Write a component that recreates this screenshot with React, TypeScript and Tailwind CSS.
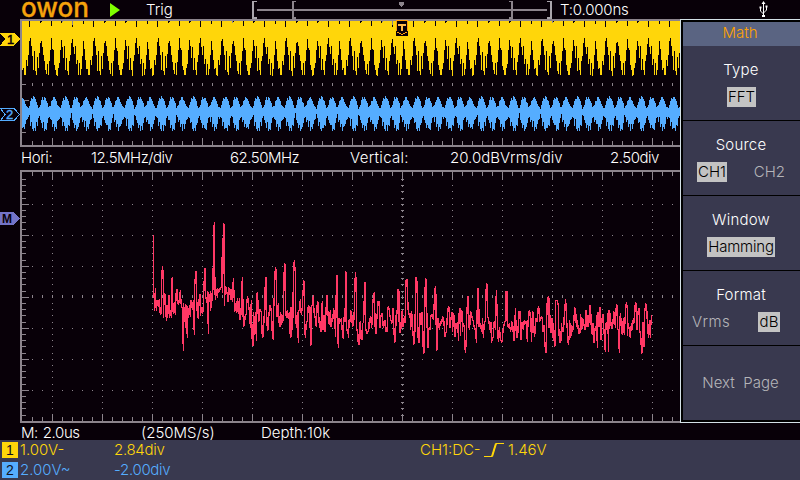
import type { ReactNode } from "react";

const GREY = "#8c848c";
const YELLOW = "#ffd60a";
const BLUE = "#55adff";

// FFT trace vertices, in thirds of a pixel
const SPECTRUM_LOW =
  "38,61 40,61 40,250 43,235 44,288 46,220 49,288 52,255 55,275 58,252 61,300 64,295 65,207 67,153 70,175 70,308 73,234 76,240 76,305 79,270 80,318 82,270 83,310 86,240 88,245 89,308 91,285 94,308 94,205 97,187 97,258 100,297 103,260 106,300 109,222 112,225 112,240 115,270 118,260 121,225 124,275 127,280 130,407 130,265 133,320 136,268 137,340 139,270 142,370 143,272 146,308 148,270 151,305 152,256 155,260 157,285 160,256 163,360 164,216 167,168 170,175 170,245 172,300 175,312 178,240 181,240 182,302 184,275 188,297 190,270 194,160 196,162 197,240 200,265 203,229 205,357 206,232 209,262 212,228 212,288 215,235 218,258 221,70 223,20 224,240 226,185 226,255 229,232 232,220 232,250 235,222 238,232 241,217 244,217 247,108 248,235 250,25 253,28 253,272 256,213 259,220 262,240 264,262 266,218 270,222 271,255 274,222 277,260 280,190 282,235 284,290 287,265 289,295 292,250 295,298 298,250 299,312 302,312 304,270 307,185 309,270 310,335 313,330 316,300 319,297 320,260 323,243 326,285 329,275 331,340 334,255 337,392 340,390 341,290 344,360 347,290 349,378 350,240 353,232 355,318 358,318 360,283 364,290 367,368 370,365 371,303 374,325 376,187 379,187 379,265 382,345 385,345 386,310 389,270 392,272 395,305 397,358 400,376 401,285 403,240 406,157 409,168 410,307 412,300 415,265 418,335 421,335 422,290 425,330 428,300 430,318 433,145 436,148 436,265 439,310 442,285 445,312 448,290 451,368 453,275 455,367 457,290 459,310 460,172 463,135 466,175 467,315 470,340 472,290 475,383 476,290 479,280 481,253 484,300 487,275 491,195 493,205 494,317 496,370 499,320 502,320 505,270 510,278 511,390 514,390 515,275 518,265 520,240 522,290 526,310 529,335 532,260 535,265 536,325 539,305 541,348 544,350 545,290 547,257 549,345 552,300 555,350 558,290 560,240 562,243 564,300 568,330 571,285 573,335 576,310 578,320 581,278 584,318 587,365 588,260 590,180 593,185 593,345 595,398 597,308 600,320 604,310 607,350 610,372 611,305 615,320 617,170 619,172 620,345 623,345 626,368 627,315 630,322 632,287 635,290 637,335 641,330 644,255 646,170 648,190 650,345 653,345 655,390 658,388 659,322 662,320 663,370 665,375 668,373 668,325 671,322 674,202 677,205 677,338 680,357 683,350 686,350 688,315 692,305 695,340 699,255 703,230 706,355 709,355 710,320 714,260 717,258 720,340 723,300 727,295 730,340 735,315 738,350 741,350 744,275 747,280 751,310 756,325 759,278 762,350 764,383 767,375 768,300 771,297 774,223 777,228 777,322 780,322";
const SPECTRUM_HIGH =
  "0,322 0,355 3,340 5,290 8,285 9,335 12,310 15,325 18,195 22,193 24,280 27,300 30,295 32,345 35,287 38,340 41,388 44,385 45,320 48,187 51,200 53,318 55,382 58,382 60,295 63,330 66,290 68,325 70,415 73,413 74,310 76,190 79,193 81,325 84,400 86,340 90,345 93,300 97,300 100,315 104,240 106,213 108,245 109,405 112,405 113,310 116,315 118,345 121,320 125,325 128,303 132,320 134,367 137,355 140,350 141,315 145,275 148,280 150,340 153,310 156,292 158,350 160,295 163,305 165,365 168,325 172,345 174,320 175,378 178,280 181,280 181,362 184,285 187,290 187,350 190,325 193,335 196,415 199,380 200,310 203,245 206,247 206,335 209,345 211,290 214,295 217,312 220,320 224,345 227,340 229,383 231,310 233,222 236,222 237,335 241,325 245,350 248,310 250,370 253,320 256,318 259,205 262,208 262,300 266,315 270,345 273,322 274,383 277,375 280,365 281,325 284,320 286,345 289,225 291,280 293,362 296,380 298,335 301,365 304,382 307,380 309,345 313,325 316,318 318,228 321,230 321,315 325,340 328,325 332,350 335,320 338,325 341,375 344,375 346,280 350,370 353,365 355,325 357,290 360,290 362,375 365,370 366,320 370,345 373,315 376,325 379,318 382,382 383,345 386,290 389,285 392,320 395,380 397,290 400,295 403,365 406,350 408,310 411,320 413,290 416,272 419,320 422,310 426,305 429,350 432,330 434,375 437,415 439,410 441,270 444,245 447,250 447,340 450,300 453,355 456,310 458,370 461,325 463,395 466,390 467,256 473,258 475,275 477,360 480,383 483,375 484,325 488,350 491,345 493,295 497,252 499,300 502,345 505,390 508,360 509,315 512,370 515,330 518,350 521,325 524,277 527,285 529,335 532,315 536,355 540,355 542,298 545,345 548,310 552,330 555,345 558,285 561,335 563,300 566,335 569,270 572,280 574,345 577,360 579,325 582,385 585,340 588,345 590,300 592,400 594,290 597,335 600,275 601,370 604,375 606,310 609,298 612,350 616,412 618,325 621,330 623,295 626,412 627,285 631,300 634,340 638,335 641,290 644,295 646,340 649,268 652,272 653,340 656,350 658,415 659,310 662,295 664,345 667,360 670,310 673,360 676,295 679,262 682,280 682,362 685,325 688,345 691,370 694,325 697,345 700,310 703,325 706,262 709,265 711,345 714,290 717,280 719,345 722,360 725,415 728,412 729,320 732,395 734,295 737,265 740,275 743,345 746,370 748,315 751,368 753,320 755,300";

const range = (n: number) => Array.from({ length: n }, (_, i) => i);

// CH1 repeats every 64 columns: lowest lit row of each column
const CH1_BOTTOM = [
  50, 49, 56, 56, 41, 46, 36, 22, 19, 27, 36, 51, 32, 52, 56, 37, 49, 34, 24, 22, 27, 36, 42, 51, 55, 44, 56, 42, 31, 19, 29, 31,
  46, 51, 56, 56, 49, 44, 31, 21, 27, 39, 27, 51, 39, 51, 56, 42, 36, 24, 19, 28, 35, 27, 45, 40, 56, 44, 56, 50, 36, 22, 30, 41,
];
// columns where the sampled top edge dips, and how far down
const CH1_DIPS: Record<number, number> = { 7: 8, 18: 4, 19: 3, 29: 7, 39: 4, 40: 3, 50: 8, 61: 5 };

// CH2 repeats every 32 columns
const CH2_TOP = [
  78, 80, 82, 85, 87, 88, 89, 86, 82, 79, 80, 77, 78, 80, 82, 86, 89, 88, 86, 81, 78, 80, 78, 79, 82, 84, 88, 87, 86, 82, 81, 78,
];
const CH2_BOTTOM = [
  112, 108, 110, 105, 101, 100, 98, 99, 107, 103, 110, 112, 109, 112, 106, 107, 99, 97, 101, 104, 109, 106, 112, 110, 111, 104, 99, 98, 103, 101, 108, 105,
];

function columns(top: (i: number) => number, bottom: (i: number) => number) {
  return range(658)
    .map((i) => `M${22 + i} ${top(i)}h1V${bottom(i)}h-1z`)
    .join("");
}

const ch1Path = columns(
  (i) => CH1_DIPS[i % 64] ?? 2,
  (i) => CH1_BOTTOM[i % 64] + (i % 5 === 0 ? 1 : 0),
);
const ch2Path = columns(
  (i) => CH2_TOP[i % 32] + ((i * 5) % 7 === 0 ? 1 : 0),
  (i) => CH2_BOTTOM[i % 32] - ((i * 11) % 7 === 0 ? 3 : 0),
);

function TimeView() {
  return (
    <svg className="block h-[128px] w-[680px]" viewBox="0 0 680 128" shapeRendering="crispEdges">
      {range(65).map((i) => {
        const x = 32 + i * 10;
        const major = i % 5 === 2;
        return (
          <g key={i} fill={GREY}>
            <rect x={x} y={2} width={1} height={major ? 7 : 4} />
            <rect x={x} y={64} width={1} height={3} />
            <rect x={x} y={major ? 119 : 122} width={1} height={major ? 7 : 4} />
          </g>
        );
      })}
      <path d="M22 65h4v1h-4zM22 81h7v1h-7zM22 113h4v1h-4z" fill={GREY} />
      <path d={ch1Path} fill={YELLOW} />
      <path d={ch2Path} fill={BLUE} />
      <path d="M20 0h660v2H22v124h658v2H20z" fill={GREY} />

      <path d="M0 14h14l6 6-6 7H0l5-7z" fill={YELLOW} />
      <text x={7} y={25} fontSize={13} className="font-['Liberation_Sans']" fill="#080008" stroke="#080008" strokeWidth={0.5}>1</text>
      <path d="M.5 89.500h13.500l5.500 6-5.500 6H.5l4.500-6z" fill="none" stroke={BLUE} />
      <text x={6} y={100} fontSize={13} className="font-['Liberation_Sans']" fill={BLUE} stroke={BLUE} strokeWidth={0.4}>2</text>

      <path d="M396 1h12v16h-12z" fill="#080008" />
      <path d="M396 1h12v11h-1V2h-10v10h-1zM397 13h2v1h2v1h2v-1h2v-1h2v1h-2v1h-2v1h-2v-1h-2v-1h-2z" fill="#ff9e10" />
      <path d="M398 5h8v2h-3v5h-2V7h-3z" fill="#ffb84a" />
    </svg>
  );
}

function SpectrumView() {
  return (
    <svg className="block h-[253px] w-[680px]" viewBox="0 0 680 253" shapeRendering="crispEdges">
      <g fill={GREY}>
        {range(65).map((i) => {
          const x = 32 + i * 10;
          const major = i % 5 === 2;
          return (
            <g key={i}>
              <rect x={x} y={2} width={1} height={major ? 7 : 4} />
              <rect x={x} y={major ? 244 : 247} width={1} height={major ? 7 : 4} />
              <rect x={x} y={125} width={1} height={3} />
              {[34, 65, 96, 158, 189, 220].map((y) => (
                <rect key={y} x={x} y={y} width={1} height={1} />
              ))}
            </g>
          );
        })}
        {range(39).map((j) => {
          const y = Math.round(9 + j * 6.2);
          const major = j % 5 === 4;
          return (
            <g key={j}>
              <rect x={22} y={y} width={major ? 7 : 4} height={1} />
              {range(13).map((i) => (
                <rect key={i} x={52 + i * 50} y={y} width={1} height={1} />
              ))}
              <path d={`M401 ${y}h3v1h-1v1h-1v-1h-1z`} />
            </g>
          );
        })}
        <path d="M20 0h660v2H22v249h658v2H20z" />
      </g>
      <g fill="none" stroke="#ff3865" strokeWidth={4} strokeLinejoin="bevel">
        <polyline points={SPECTRUM_LOW} transform="translate(140 45) scale(.33333)" />
        <polyline points={SPECTRUM_HIGH} transform="translate(400 45) scale(.33333)" />
      </g>
      <path d="M0 42h14l6 6.500-6 6.500H0z" fill="#7474c8" />
      <text x={2} y={53} fontSize={12} fontWeight={700} className="font-['Liberation_Sans']" fill="#080008">M</text>
    </svg>
  );
}

function TopBar() {
  return (
    <header className="flex h-[19px] shrink-0 items-center">
      <svg className="h-[19px] w-[146px] overflow-visible" viewBox="0 0 146 19">
        <text x={21} y={17} fontSize={27} fontWeight={500} textLength={68} lengthAdjust="spacingAndGlyphs" className="font-['Inter']" fill="#f5a30c" stroke="#f5a30c" strokeWidth={0.3}>owon</text>
        <path d="M110 3l10 7-10 7z" fill="#80ff00" />
      </svg>
      <span className="w-[106px] pt-px">Trig</span>
      <svg className="h-[19px] w-[308px]" viewBox="252 0 308 19" shapeRendering="crispEdges">
        <path d="M257 9h290v2H257z" fill={GREY} />
        <path d="M252 1h5v1h-3v15h3v2h-5zM552 1h-5v1h3v15h-3v2h5z" fill="#aaa5ac" />
        <path d="M292 1h4v1h-2v15h2v2h-4zM513 1h-4v1h2v15h-2v2h4z" fill={GREY} />
        <path d="M399 2h5v3h-1v1h-1v1h-1V6h-1V5h-1z" fill={GREY} />
      </svg>
      <span className="w-[199px] pt-[2px] tracking-[-0.2px]">T:0.000ns</span>
      <svg className="h-[17px] w-[9px]" viewBox="0 0 9 17" fill="none" stroke="#fff" strokeWidth={1}>
        <path d="M4.500 2v13M1.500 7v3l3 3M7.500 6v3l-3 3" />
        <path d="M4.500 0l2 3h-4zM3 14h3v2H3zM.5 5.500h2v2h-2zM6.500 4.500h2v2h-2z" fill="#fff" stroke="none" />
      </svg>
    </header>
  );
}

function Option({ on, children }: { on?: boolean; children: ReactNode }) {
  return on ? (
    <span className="h-5 bg-[#c3c3c3] px-px leading-5 text-black">{children}</span>
  ) : (
    <span className="h-5 leading-5 text-[#b5b5b9]">{children}</span>
  );
}

function MenuItem({ title, children }: { title: string; children: ReactNode }) {
  return (
    <div className="h-[74px] bg-[#39394f] pt-[14px]">
      <div className="h-[21px] pr-px text-center leading-5 tracking-[0.2px]">{title}</div>
      <div className="flex justify-center pt-[6px]">{children}</div>
    </div>
  );
}

function Menu() {
  return (
    <aside className="h-[404px] w-[120px] border-y border-l border-[#d3e0e6] bg-black pt-[2px] pl-[2px]">
      <h1 className="h-6 bg-[#5a6482] pr-[3px] text-center leading-[22px] text-[#ffa200]">Math</h1>
      <div className="flex flex-col gap-px">
        <MenuItem title="Type">
          <Option on>FFT</Option>
        </MenuItem>
        <MenuItem title="Source">
          <div className="flex w-full justify-between pr-[15px] pl-[14px]">
            <Option on>CH1</Option>
            <Option>CH2</Option>
          </div>
        </MenuItem>
        <MenuItem title="Window">
          <div className="flex pr-px tracking-[-0.2px]">
            <Option on>Hamming</Option>
          </div>
        </MenuItem>
        <MenuItem title="Format">
          <div className="flex w-full justify-between pr-5 pl-[9px] tracking-[0.4px]">
            <Option>Vrms</Option>
            <Option on>dB</Option>
          </div>
        </MenuItem>
        <div className="h-[74px] bg-[#39394f] pr-[2px] text-center leading-[74px] text-[#b5b5b9]">Next&nbsp; Page</div>
      </div>
    </aside>
  );
}

function StatusBar() {
  return (
    <footer className="flex h-10 shrink-0 bg-[#39394f] text-[#ffd60a]">
      <div className="flex w-[420px] flex-col">
        <div className="flex h-5 items-center pl-[2px]">
          <b className="mr-[2px] h-4 w-4 bg-[#ffd60a] text-center font-['Liberation_Sans'] text-[14px] leading-4 text-[#101020]">1</b>
          <span className="w-[94px]">1.00V-</span>
          <span className="tracking-[-0.3px]">2.84div</span>
        </div>
        <div className="flex h-5 items-center pl-[2px] text-[#55adff]">
          <b className="mr-[2px] h-4 w-4 bg-[#55adff] text-center font-['Liberation_Sans'] text-[14px] leading-4 text-[#101020]">2</b>
          <span className="w-[94px]">2.00V~</span>
          <span className="tracking-[-0.3px]">-2.00div</span>
        </div>
      </div>
      <div className="flex h-5 items-center">
        <span className="w-[64px]">CH1:DC-</span>
        <svg className="h-4 w-[24px]" viewBox="0 0 24 16" fill="none" stroke="#ffd60a">
          <path d="M0 14.500h8L12 1.500h8" />
          <path d="M8 14.500L12 1.500" strokeWidth={2} />
        </svg>
        <span>1.46V</span>
      </div>
    </footer>
  );
}

export default function App() {
  return (
    <div className="flex h-[480px] w-[800px] flex-col overflow-hidden bg-[#080008] font-['Inter',sans-serif] text-[15px] font-light whitespace-nowrap text-white">
      <TopBar />
      <div className="flex h-[421px] shrink-0">
        <main className="w-[680px]">
          <TimeView />
          <div className="flex h-[23px] items-center pl-[21px]">
            <span className="w-[70px] tracking-[-0.4px]">Hori:</span>
            <span className="w-[139px] tracking-[-0.5px]">12.5MHz/div</span>
            <span className="w-[120px] tracking-[-0.5px]">62.50MHz</span>
            <span className="w-[100px] tracking-[0.3px]">Vertical:</span>
            <span className="w-[160px]">20.0dBVrms/div</span>
            <span className="tracking-[-0.5px]">2.50div</span>
          </div>
          <SpectrumView />
          <div className="flex h-[17px] items-center pt-[2px] pl-[21px] leading-[15px]">
            <span className="w-[120px] tracking-[-0.4px] [word-spacing:1px]">M: 2.0us</span>
            <span className="w-[120px]">(250MS/s)</span>
            <span>Depth:10k</span>
          </div>
        </main>
        <Menu />
      </div>
      <StatusBar />
    </div>
  );
}
